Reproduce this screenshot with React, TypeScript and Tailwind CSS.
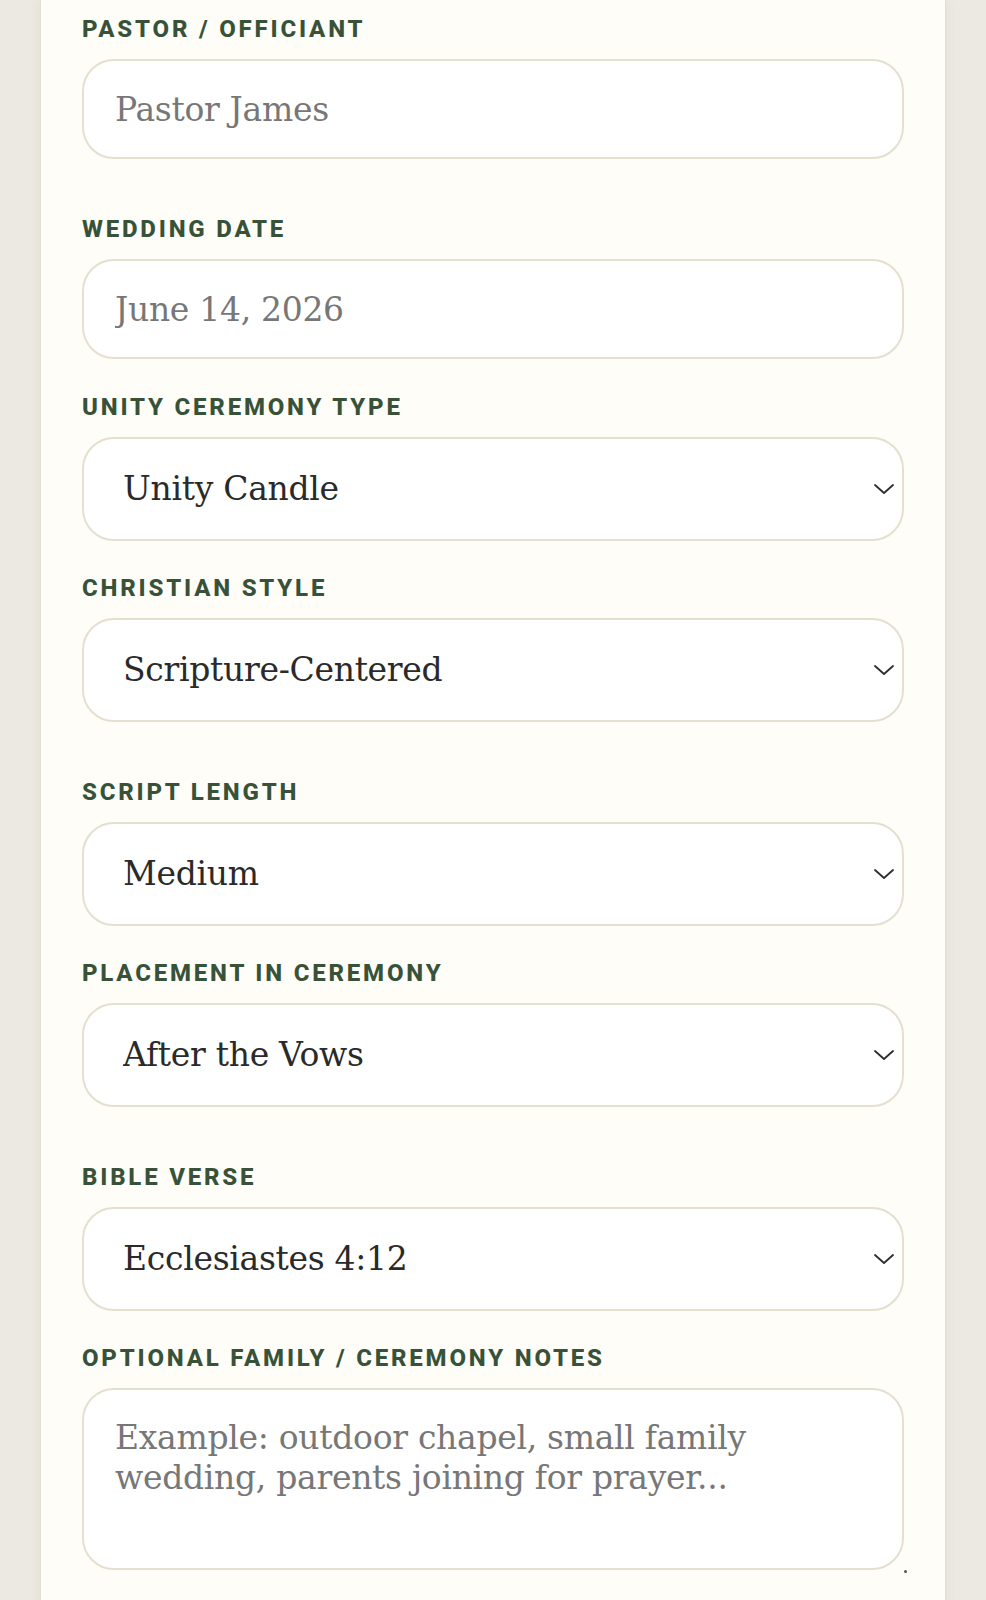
import { ChangeEvent, useState } from 'react';

const serif = 'font-["DejaVu_Serif","Liberation_Serif",serif] tracking-[-0.3px]';

function Label({ children }: { children: string }) {
  return (
    <label className='block mb-[18px] font-["Roboto","Liberation_Sans",sans-serif] text-[24px] leading-[24px] font-extrabold uppercase tracking-[2.8px] text-[#38523a]'>
      {children}
    </label>
  );
}

function Chevron() {
  return (
    <svg
      className="pointer-events-none absolute right-[10px] top-1/2 -translate-y-1/2"
      width="20"
      height="11"
      viewBox="0 0 20 11"
      fill="none"
    >
      <path d="M1 1.5 L10 9.5 L19 1.5" stroke="#2e2e2e" strokeWidth="1.8" strokeLinecap="round" strokeLinejoin="round" />
    </svg>
  );
}

interface SelectFieldProps {
  label: string;
  options: string[];
  className?: string;
}

function SelectField({ label, options, className }: SelectFieldProps) {
  const [value, setValue] = useState(options[0]);
  return (
    <div className={className}>
      <Label>{label}</Label>
      <div className="relative">
        <select
          value={value}
          onChange={(e: ChangeEvent<HTMLSelectElement>) => setValue(e.target.value)}
          className={`${serif} block w-full h-[104px] appearance-none rounded-[32px] border-2 border-[#e5dfd0] bg-white pl-[39px] pr-12 text-[33px] text-[#2a2a2a] outline-none`}
        >
          {options.map((o) => (
            <option key={o}>{o}</option>
          ))}
        </select>
        <Chevron />
      </div>
    </div>
  );
}

export default function App() {
  return (
    <div className="min-h-[1600px] bg-[#ece9e2] px-10">
      <div className="border-x border-[#e4ded0] bg-[#fffdf7] px-[41px] pt-[17px] pb-[40px] shadow-[0_0_10px_rgba(120,110,90,0.08)]">
        {/* Officiant */}
        <div>
          <Label>Pastor / Officiant</Label>
          <input
            placeholder="Pastor James"
            className={`${serif} block w-full h-[100px] rounded-[32px] border-2 border-[#e5dfd0] bg-white px-[31px] text-[33px] text-[#2a2a2a] placeholder:text-[#777777] outline-none`}
          />
        </div>

        <div className="mt-[58px]">
          <Label>Wedding Date</Label>
          <input
            placeholder="June 14, 2026"
            className={`${serif} block w-full h-[100px] rounded-[32px] border-2 border-[#e5dfd0] bg-white px-[31px] text-[33px] text-[#2a2a2a] placeholder:text-[#777777] outline-none`}
          />
        </div>

        <SelectField
          className="mt-[36px]"
          label="Unity Ceremony Type"
          options={['Unity Candle', 'Sand Ceremony', 'Cord of Three Strands', 'Communion']}
        />
        <SelectField
          className="mt-[35px]"
          label="Christian Style"
          options={['Scripture-Centered', 'Traditional', 'Contemporary']}
        />
        <SelectField className="mt-[58px]" label="Script Length" options={['Medium', 'Short', 'Long']} />
        <SelectField
          className="mt-[35px]"
          label="Placement in Ceremony"
          options={['After the Vows', 'Before the Vows', 'After the Rings']}
        />
        <SelectField
          className="mt-[58px]"
          label="Bible Verse"
          options={['Ecclesiastes 4:12', '1 Corinthians 13:4-7', 'Genesis 2:24']}
        />

        {/* Notes */}
        <div className="mt-[35px]">
          <Label>Optional Family / Ceremony Notes</Label>
          <div className="relative">
            <textarea
              placeholder="Example: outdoor chapel, small family wedding, parents joining for prayer..."
              className={`${serif} block w-full h-[182px] resize-none rounded-[32px] border-2 border-[#e5dfd0] bg-white px-[31px] pt-[28px] text-[33px] leading-[40px] text-[#2a2a2a] placeholder:text-[#777777] outline-none`}
            />
            <span className="absolute -right-[3px] -bottom-[3px] h-[3px] w-[3px] rounded-full bg-[#555]" />
          </div>
        </div>
      </div>
    </div>
  );
}
